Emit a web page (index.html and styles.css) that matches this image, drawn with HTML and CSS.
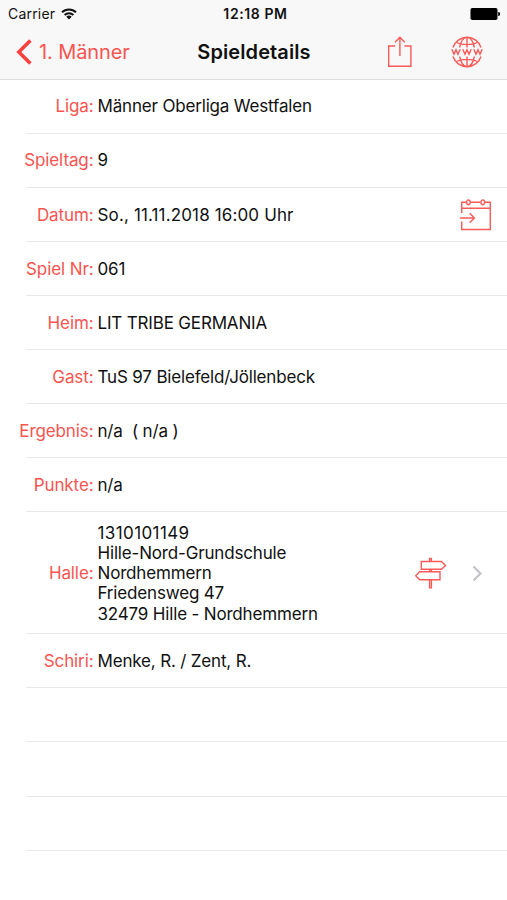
FILE: index.html
```html
<!DOCTYPE html>
<html lang="de">
<head>
    <meta charset="UTF-8">
    <meta name="viewport" content="width=device-width, initial-scale=1.0">
    <title>Spieldetails</title>
    <link rel="stylesheet" href="styles.css">
</head>
<body>
    <header>
        <div class="statusbar">
            <div class="carrier">
                <span>Carrier</span>
                <svg width="16" height="12" viewBox="0 0 16 12" fill="none" stroke="#111" stroke-width="2">
                    <path d="M1 4.3a10 10 0 0 1 14 0"/>
                    <path d="M3.6 7a6.3 6.3 0 0 1 8.8 0"/>
                    <path d="M8 11.5L5.3 8.8a3.9 3.9 0 0 1 5.4 0z" fill="#111" stroke="none"/>
                </svg>
            </div>
            <div class="time">12:18 PM</div>
            <div class="battery">
                <svg width="30" height="12" viewBox="0 0 30 12">
                    <rect x="0.5" y="0" width="27" height="12" rx="1.8" fill="#000"/>
                    <path d="M28.2 4a2 2 0 0 1 0 4z" fill="#000"/>
                </svg>
            </div>
        </div>
        <nav class="navbar">
            <a href="#" class="back">
                <svg width="16" height="26" viewBox="0 0 16 26" fill="none" stroke="#f8423f" stroke-width="3.6">
                    <path d="M14.4 1.4L2.8 13l11.6 11.6"/>
                </svg>
                <span>1. Männer</span>
            </a>
            <h1>Spieldetails</h1>
            <div class="actions">
                <svg width="26" height="32" viewBox="0 0 26 32" fill="none" stroke="#f95b58" stroke-width="1.4">
                    <path d="M8.2 10H1.700v20.300h22.200V10h-6.400"/>
                    <path d="M12.900 20V1.600M8 6.200l4.900-4.900 4.900 4.900"/>
                </svg>
                <svg width="32" height="32" viewBox="0 0 32 32" fill="none" stroke="#f95b58" stroke-width="1.4">
                    <path d="M2 11.500a14.700 14.700 0 0 1 28 0M2 20.500a14.700 14.700 0 0 0 28 0"/>
                    <path d="M8.600 11.500C9.800 5.500 12.600 1.400 16 1.400s6.200 4.100 7.400 10.100M8.600 20.500c1.200 6 4 10.100 7.400 10.100s6.200-4.100 7.400-10.100"/>
                    <path d="M16 1.400v10.100M16 20.500v10.100M5.500 6.500c5.500 2.800 15.500 2.800 21 0M5.500 25.500c5.500-2.800 15.500-2.800 21 0"/>
                    <path d="M.8 13.300l2.200 5 2-4.500 2 4.500 2.200-5M11.800 13.300l2.200 5 2-4.500 2 4.500 2.200-5M22.800 13.300l2.200 5 2-4.500 2 4.500 2.200-5"/>
                </svg>
            </div>
        </nav>
    </header>

    <main>
        <div class="row">
            <div class="label">Liga:</div>
            <div class="value">Männer Oberliga Westfalen</div>
        </div>
        <div class="row">
            <div class="label">Spieltag:</div>
            <div class="value">9</div>
        </div>
        <div class="row">
            <div class="label">Datum:</div>
            <div class="value date">So., 11.11.2018 16:00 Uhr</div>
            <svg class="calendar" width="32" height="32" viewBox="0 0 32 32" fill="none" stroke="#f95b58" stroke-width="1.4">
                <path d="M1.700 14V3.300h4.800M10.300 3.300h10.500M24.700 3.300h5.600v27.200H1.700v-8M1.700 9.300h28.600"/>
                <ellipse cx="8.400" cy="3.300" rx="1.800" ry="2.400"/>
                <ellipse cx="22.800" cy="3.300" rx="1.800" ry="2.400"/>
                <path d="M0 19h14M9.700 14.300l4.700 4.700-4.700 4.700"/>
            </svg>
        </div>
        <div class="row">
            <div class="label">Spiel Nr:</div>
            <div class="value">061</div>
        </div>
        <div class="row">
            <div class="label">Heim:</div>
            <div class="value">LIT TRIBE GERMANIA</div>
        </div>
        <div class="row">
            <div class="label">Gast:</div>
            <div class="value">TuS 97 Bielefeld/Jöllenbeck</div>
        </div>
        <div class="row">
            <div class="label">Ergebnis:</div>
            <div class="value">n/a&nbsp; ( n/a )</div>
        </div>
        <div class="row">
            <div class="label">Punkte:</div>
            <div class="value">n/a</div>
        </div>
        <div class="row hall">
            <div class="label">Halle:</div>
            <div class="value"><span class="number">1310101149</span><br>Hille-Nord-Grundschule<br>Nordhemmern<br>Friedensweg 47<br>32479 Hille - Nordhemmern</div>
            <svg class="signpost" width="32" height="32" viewBox="0 0 32 32" fill="none" stroke="#f95b58" stroke-width="1.4">
                <path d="M6.300 4.500h20.200l4 3.900-4 3.900H6.300z"/>
                <path d="M25 14.700H4.700l-4 4 4 4H25z"/>
                <path d="M14.600 4.500V1.500h1.800v3M14.600 12.300v2.400M16.400 12.300v2.400M14.600 22.700v8h1.800v-8"/>
            </svg>
            <svg class="chevron" width="11" height="17" viewBox="0 0 11 17" fill="none" stroke="#c3c3c8" stroke-width="2.200">
                <path d="M1.500 1.500l7 7-7 7"/>
            </svg>
        </div>
        <div class="row">
            <div class="label">Schiri:</div>
            <div class="value">Menke, R. / Zent, R.</div>
        </div>
        <div class="row"></div>
        <div class="row"></div>
        <div class="row"></div>
    </main>
</body>
</html>
```

FILE: styles.css
```css
body {
    font-family: Inter, "Liberation Sans", sans-serif;
    background-color: #fff;
    color: #111;
    margin: 0;
    height: 900px;
    overflow: hidden;
}

svg {
    display: block;
    flex: none;
}

header {
    box-sizing: border-box;
    height: 79.5px;
    background-color: #f8f8f8;
    border-bottom: 1px solid #dedede;
}

.statusbar {
    display: grid;
    grid-template-columns: 1fr auto 1fr;
    align-items: center;
    height: 27px;
    padding: 0 7px 0 8px;
    font-size: 14px;
}

.carrier {
    display: flex;
    align-items: center;
    gap: 6px;
    letter-spacing: 0.2px;
}

.time {
    font-weight: 600;
    letter-spacing: 0.6px;
    padding-left: 3px;
}

.battery {
    justify-self: end;
}

.navbar {
    display: grid;
    grid-template-columns: 1fr auto 1fr;
    align-items: center;
    height: 49px;
    padding: 0 24px 0 16px;
}

.back {
    display: flex;
    align-items: center;
    gap: 7px;
    color: #f95450;
    font-size: 20px;
    letter-spacing: -0.1px;
    text-decoration: none;
}

h1 {
    margin: 0;
    padding-left: 9px;
    font-size: 20px;
    font-weight: 600;
    letter-spacing: 0.1px;
}

.actions {
    display: flex;
    justify-content: flex-end;
    align-items: center;
    gap: 38px;
}

.row {
    display: flex;
    align-items: center;
    box-sizing: border-box;
    height: 54.1px;
    font-size: 17px;
    line-height: 20.3px;
    background: linear-gradient(#e9e9eb, #e9e9eb) 26px 100% / 100% 1px no-repeat;
}

.hall {
    height: 122px;
}

.label {
    width: 93.5px;
    margin-right: 4px;
    text-align: right;
    color: #f95450;
    letter-spacing: -0.1px;
}

.value {
    flex: 1;
    letter-spacing: -0.17px;
}

.date {
    letter-spacing: 0.14px;
}

.number {
    letter-spacing: 0.4px;
}

.calendar {
    margin-right: 15px;
}

.signpost {
    margin-right: 25px;
}

.chevron {
    margin-right: 24px;
}
```
